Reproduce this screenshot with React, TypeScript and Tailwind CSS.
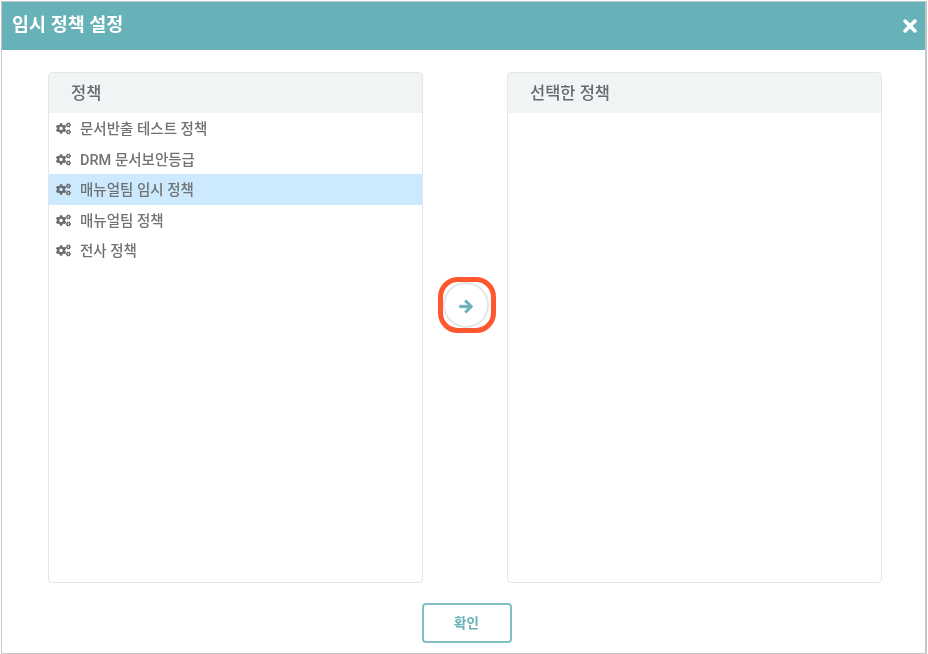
import React from "react";
import { FaCogs, FaArrowRight, FaTimes } from "react-icons/fa";

const font = "font-['Roboto','Noto_Sans_CJK_KR',sans-serif]";
const items = ["문서반출 테스트 정책", "DRM 문서보안등급", "매뉴얼팀 임시 정책", "매뉴얼팀 정책", "전사 정책"];

function Panel({ title, rows }: { title: string; rows?: string[] }) {
  return (
    <div className="w-[375px] shrink-0 self-stretch flex flex-col rounded-[4px] border border-[#e3e5e6] overflow-hidden bg-white">
      <div className="h-[40px] shrink-0 bg-[#f1f4f5] pl-[22px] pt-[2px] flex items-center text-[16.5px] font-medium text-[#666b6d]">{title}</div>
      {rows && (
        <ul>
          {rows.map((r, i) => (
            <li
              key={r}
              className={`h-[30.5px] flex items-center pl-[7px] gap-[9px] text-[14.5px] font-medium text-[#6f7274] ${i === 2 ? "bg-[#cde9fd]" : ""}`}
            >
              <FaCogs className="w-[15px] h-[13px] mt-[1px] text-[#6a6d6f]" />
              <span className="pt-[4px]">{r}</span>
            </li>
          ))}
        </ul>
      )}
    </div>
  );
}

export default function App() {
  return (
    <div className={`w-[928px] h-[654px] bg-white p-[1px] blur-[0.4px] ${font}`}>
      <div className="w-[926px] h-[653px] border border-[#c4c6c7] border-r-2 flex flex-col">
        <header className="h-[48px] shrink-0 bg-[#67b1b8] flex items-center justify-between pl-[10px] pr-[5px]">
          <h1 className="text-[18.5px] font-bold text-white">임시 정책 설정</h1>
          <FaTimes className="w-[20px] h-[20px] text-white" />
        </header>
        <main className="flex-1 min-h-0 flex flex-col pl-[46px] pt-[22px]">
          <div className="h-[511px] flex items-center">
            <Panel title="정책" rows={items} />
            <div className="w-[84px] shrink-0 flex justify-center">
              <div className="relative ml-[1px] -mt-[45px]">
                <button className="w-[46px] h-[46px] rounded-full bg-white border-2 border-[#e6e7e7] flex items-center justify-center">
                  <FaArrowRight className="w-[16px] h-[15px] mt-[3px] text-[#67b1b8]" stroke="currentColor" strokeWidth={30} />
                </button>
                <div className="absolute -left-[5px] -top-[5px] w-[58px] h-[56px] rounded-[20px] border-[5px] border-[#ff5730]" />
              </div>
            </div>
            <Panel title="선택한 정책" />
          </div>
          <div className="w-[834px] flex justify-center mt-[20px]">
            <button className="w-[90px] h-[40px] ml-[3px] rounded-[4px] border-2 border-[#83c0c6] bg-white text-[13.5px] font-bold text-[#67b1b8]">확인</button>
          </div>
        </main>
      </div>
    </div>
  );
}
